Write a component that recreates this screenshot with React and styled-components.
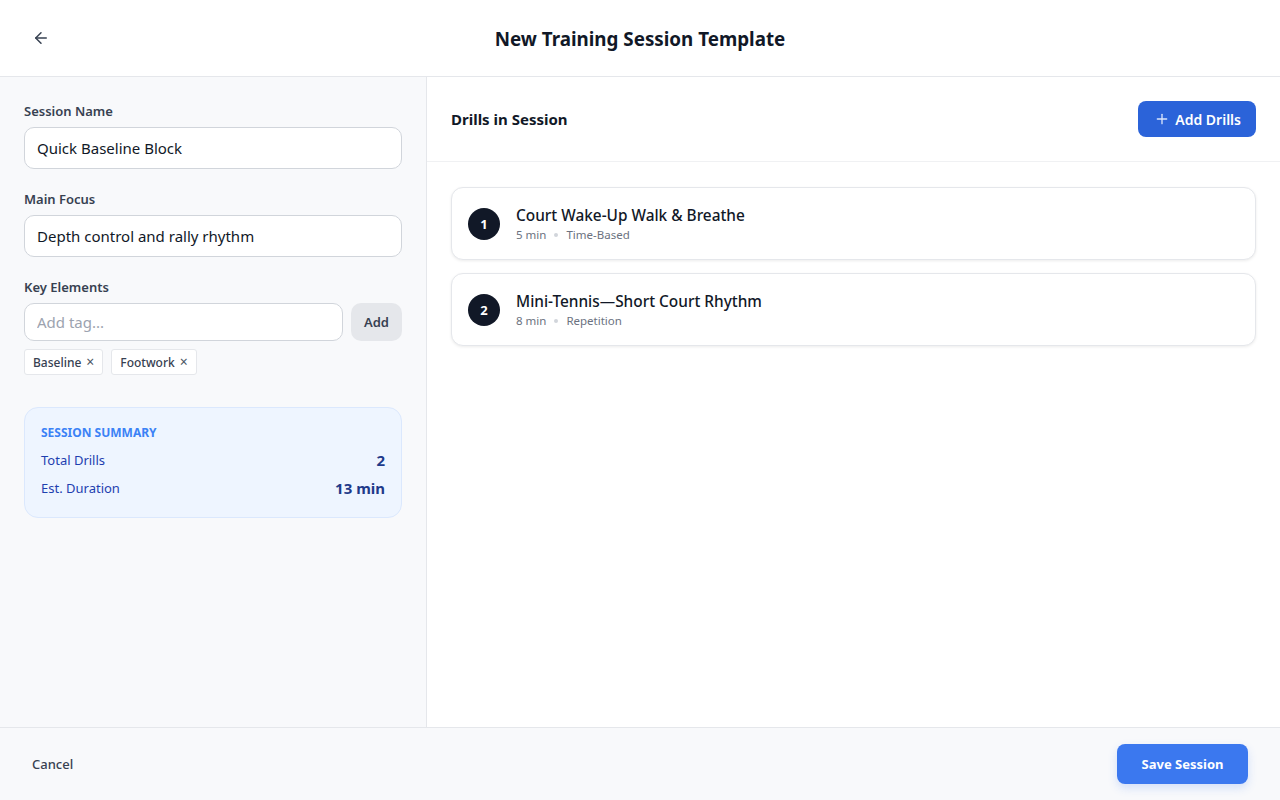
import React, { useState } from 'react';
import styled, { createGlobalStyle } from 'styled-components';

const GlobalStyle = createGlobalStyle`
  * { box-sizing: border-box; }
  html, body { margin: 0; padding: 0; height: 100%; }
  body {
    font-family: "Noto Sans", "Open Sans", sans-serif;
    color: #111827;
    background: #ffffff;
  }
  #root { height: 100%; }
`;

const drills = [
  { id: 1, name: 'Court Wake-Up Walk & Breathe', minutes: 5, type: 'Time-Based' },
  { id: 2, name: 'Mini-Tennis\u2014Short Court Rhythm', minutes: 8, type: 'Repetition' },
];

const App = () => {
  const [tags, setTags] = useState(['Baseline', 'Footwork']);
  const total = drills.reduce((sum, d) => sum + d.minutes, 0);

  return (
    <Page>
      <GlobalStyle />
      <Header>
        <BackBtn aria-label="Back">
          <svg width="18" height="18" viewBox="0 0 24 24" fill="none" stroke="#374151" strokeWidth="2" strokeLinecap="round" strokeLinejoin="round">
            <path d="M19 12H5" />
            <path d="M12 19l-7-7 7-7" />
          </svg>
        </BackBtn>
        <Title>New Training Session Template</Title>
      </Header>

      <Body>
        <Sidebar>
          <Field>
            <Label>Session Name</Label>
            <Input defaultValue="Quick Baseline Block" />
          </Field>
          <Field>
            <Label>Main Focus</Label>
            <Input defaultValue="Depth control and rally rhythm" />
          </Field>
          <Field>
            <Label>Key Elements</Label>
            <TagRow>
              <TagInput placeholder="Add tag..." />
              <AddBtn>Add</AddBtn>
            </TagRow>
            <TagList>
              {tags.map((t) => (
                <Tag key={t}>
                  {t}
                  <TagRemove onClick={() => setTags(tags.filter((x) => x !== t))}>×</TagRemove>
                </Tag>
              ))}
            </TagList>
          </Field>

          <Summary>
            <SummaryTitle>Session Summary</SummaryTitle>
            <SummaryRow>
              <span>Total Drills</span>
              <SummaryValue>{drills.length}</SummaryValue>
            </SummaryRow>
            <SummaryRow>
              <span>Est. Duration</span>
              <SummaryValue>{total} min</SummaryValue>
            </SummaryRow>
          </Summary>
        </Sidebar>

        <Main>
          <MainHeader>
            <MainTitle>Drills in Session</MainTitle>
            <PrimaryBtn>
              <svg width="16" height="16" viewBox="0 0 24 24" fill="none" stroke="#dbe6fb" strokeWidth="2" strokeLinecap="round">
                <path d="M12 5v14" />
                <path d="M5 12h14" />
              </svg>
              Add Drills
            </PrimaryBtn>
          </MainHeader>
          <DrillList>
            {drills.map((d, i) => (
              <DrillCard key={d.id}>
                <Badge>{i + 1}</Badge>
                <DrillInfo>
                  <DrillName>{d.name}</DrillName>
                  <DrillMeta>
                    <span>{d.minutes} min</span>
                    <Dot />
                    <span>{d.type}</span>
                  </DrillMeta>
                </DrillInfo>
              </DrillCard>
            ))}
          </DrillList>
        </Main>
      </Body>

      <Footer>
        <CancelBtn>Cancel</CancelBtn>
        <SaveBtn>Save Session</SaveBtn>
      </Footer>
    </Page>
  );
};

export default App;

const Page = styled.div`
  height: 100vh;
  display: flex;
  flex-direction: column;
`;

const Header = styled.header`
  height: 77px;
  flex-shrink: 0;
  border-bottom: 1px solid #e5e7eb;
  display: flex;
  align-items: center;
  justify-content: center;
  position: relative;
  background: #fff;
`;

const BackBtn = styled.button`
  position: absolute;
  left: 24px;
  top: 21px;
  width: 34px;
  height: 34px;
  border: none;
  background: transparent;
  display: flex;
  align-items: center;
  justify-content: center;
  padding: 0;
  cursor: pointer;
`;

const Title = styled.h1`
  margin: 0;
  font-size: 18.8px;
  font-weight: 700;
  color: #111827;
  margin-top: 2px;
`;

const Body = styled.div`
  flex: 1;
  display: flex;
  min-height: 0;
`;

const Sidebar = styled.aside`
  width: 427px;
  flex-shrink: 0;
  background: #f8f9fb;
  border-right: 1px solid #e5e7eb;
  padding: 24px 24px;
  display: flex;
  flex-direction: column;
  gap: 20px;
`;

const Field = styled.div`
  display: flex;
  flex-direction: column;
  gap: 6px;
`;

const Label = styled.label`
  font-size: 13px;
  font-weight: 600;
  color: #374151;
  line-height: 20px;
`;

const Input = styled.input`
  height: 42px;
  border: 1px solid #d1d5db;
  border-radius: 10px;
  background: #fff;
  padding: 0 12px;
  font-family: inherit;
  font-size: 15px;
  color: #111827;
  outline: none;
`;

const TagRow = styled.div`
  display: flex;
  gap: 8px;
`;

const TagInput = styled(Input)`
  flex: 1;
  height: 38px;
  &::placeholder { color: #9ca3af; }
`;

const AddBtn = styled.button`
  width: 51px;
  height: 38px;
  border: none;
  border-radius: 10px;
  background: #e5e7eb;
  color: #374151;
  font-family: inherit;
  font-size: 13px;
  font-weight: 600;
`;

const TagList = styled.div`
  display: flex;
  gap: 8px;
  margin-top: 2px;
`;

const Tag = styled.span`
  display: inline-flex;
  align-items: center;
  gap: 5px;
  height: 26px;
  padding: 0 8px;
  background: #fff;
  border: 1px solid #e5e7eb;
  border-radius: 3px;
  font-size: 12px;
  font-weight: 500;
  color: #374151;
`;

const TagRemove = styled.span`
  font-size: 14px;
  font-weight: 400;
  color: #4b5563;
  cursor: pointer;
  margin-top: -2px;
`;

const Summary = styled.div`
  margin-top: 12px;
  background: #eef5ff;
  border: 1px solid #dbe8fd;
  border-radius: 14px;
  padding: 16px 16px 19px;
  display: flex;
  flex-direction: column;
  gap: 8px;
`;

const SummaryTitle = styled.div`
  font-size: 12px;
  font-weight: 700;
  text-transform: uppercase;
  color: #3b82f6;
  line-height: 18px;
`;

const SummaryRow = styled.div`
  display: flex;
  justify-content: space-between;
  align-items: center;
  font-size: 13px;
  color: #1e40af;
  line-height: 20px;
`;

const SummaryValue = styled.span`
  font-size: 15px;
  font-weight: 700;
  color: #1e3a8a;
`;

const Main = styled.main`
  flex: 1;
  background: #fff;
  display: flex;
  flex-direction: column;
`;

const MainHeader = styled.div`
  height: 85px;
  border-bottom: 1px solid #f0f1f3;
  padding: 0 24px;
  display: flex;
  align-items: center;
  justify-content: space-between;
`;

const MainTitle = styled.h2`
  margin: 0;
  font-size: 15px;
  font-weight: 700;
  color: #111827;
`;

const PrimaryBtn = styled.button`
  display: inline-flex;
  align-items: center;
  gap: 5px;
  height: 36px;
  padding: 0 15px 0 16px;
  border: none;
  border-radius: 8px;
  background: #2b63d9;
  color: #fff;
  font-family: inherit;
  font-size: 14px;
  font-weight: 600;
  cursor: pointer;
`;

const DrillList = styled.div`
  padding: 25px 24px;
  display: flex;
  flex-direction: column;
  gap: 13px;
`;

const DrillCard = styled.div`
  height: 73px;
  border: 1px solid #e5e7eb;
  border-radius: 12px;
  background: #fff;
  box-shadow: 0 1px 3px rgba(0, 0, 0, 0.08);
  padding: 0 16px;
  display: flex;
  align-items: center;
  gap: 16px;
`;

const Badge = styled.div`
  width: 32px;
  height: 32px;
  border-radius: 50%;
  background: #111827;
  color: #fff;
  font-size: 13px;
  font-weight: 700;
  display: flex;
  align-items: center;
  justify-content: center;
`;

const DrillInfo = styled.div`
  display: flex;
  flex-direction: column;
  gap: 1px;
  margin-top: 1px;
`;

const DrillName = styled.div`
  font-size: 15.4px;
  font-weight: 500;
  color: #111827;
  line-height: 21px;
`;

const DrillMeta = styled.div`
  display: flex;
  align-items: center;
  gap: 8px;
  font-size: 11.5px;
  color: #6b7280;
  line-height: 16px;
`;

const Dot = styled.span`
  width: 4px;
  height: 4px;
  border-radius: 50%;
  background: #d1d5db;
`;

const Footer = styled.footer`
  height: 73px;
  flex-shrink: 0;
  border-top: 1px solid #e5e7eb;
  background: #f8f9fb;
  padding: 0 32px;
  display: flex;
  align-items: center;
  justify-content: space-between;
`;

const CancelBtn = styled.button`
  border: none;
  background: transparent;
  padding: 0;
  font-family: inherit;
  font-size: 13px;
  font-weight: 500;
  color: #374151;
  cursor: pointer;
`;

const SaveBtn = styled.button`
  height: 40px;
  width: 131px;
  border: none;
  border-radius: 8px;
  background: #3b78ef;
  color: #fff;
  font-family: inherit;
  font-size: 13px;
  font-weight: 700;
  box-shadow: 0 4px 10px rgba(59, 120, 239, 0.2);
  cursor: pointer;
`;
